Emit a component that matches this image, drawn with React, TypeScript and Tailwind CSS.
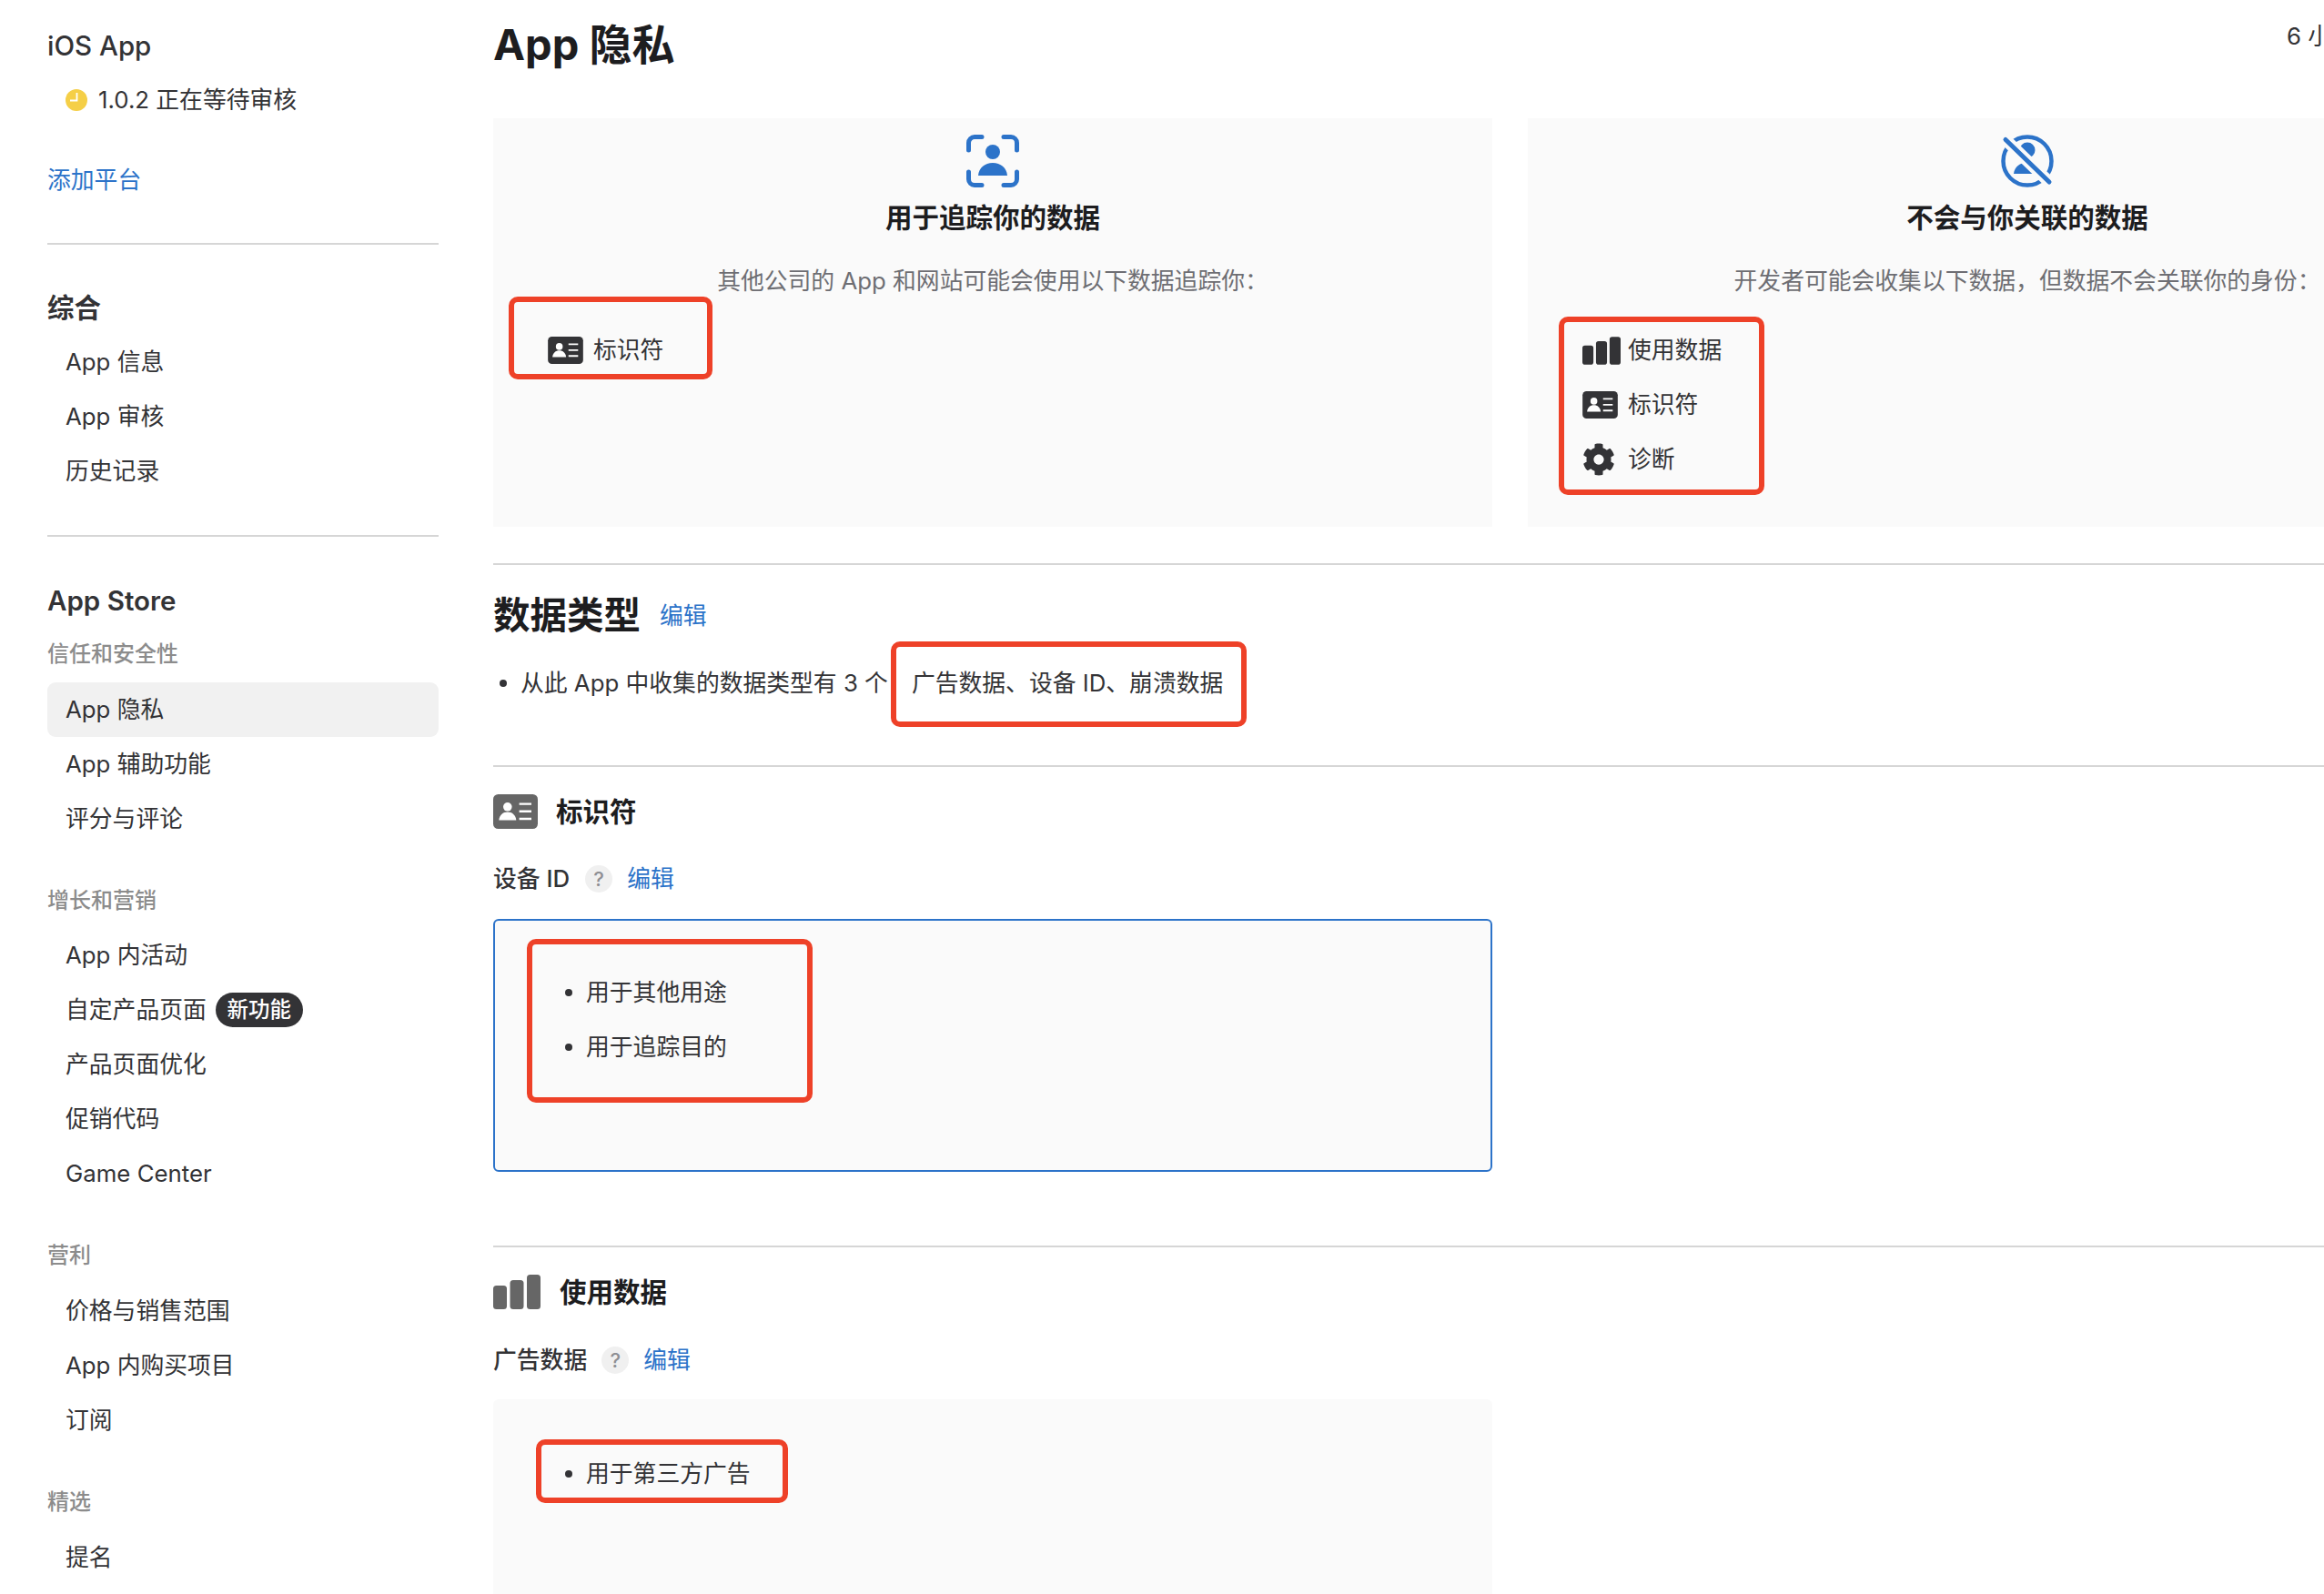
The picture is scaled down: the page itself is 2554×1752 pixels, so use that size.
import React from "react";
import { FaCog } from "react-icons/fa";

const IdCard = ({ className, fill }: { className: string; fill: string }) => (
  <svg viewBox="0 0 49 38" className={className}>
    <rect width="49" height="38" rx="5.5" fill={fill} />
    <circle cx="15.8" cy="13.8" r="4.8" fill="#fff" />
    <path d="M6.3 28.4c.5-5.6 4.4-9 9.5-9s9 3.4 9.5 9z" fill="#fff" />
    <path d="M28.6 10.6h13.4M28.6 18.8h13.4M28.6 27h13.4" stroke="#fff" strokeWidth="2.4" />
  </svg>
);

const Bars = ({ className, fill }: { className: string; fill: string }) => (
  <svg viewBox="0 0 52 38" className={className}>
    <rect x="0" y="12" width="15" height="26" rx="3.5" fill={fill} />
    <rect x="18.5" y="6" width="15" height="32" rx="3.5" fill={fill} />
    <rect x="37" y="0" width="15" height="38" rx="3.5" fill={fill} />
  </svg>
);

const TrackIcon = () => (
  <svg viewBox="0 0 58 58" className="h-[58px] w-[58px]" fill="none">
    <path
      d="M2.5 17V9a6.5 6.5 0 0 1 6.500-6.500H17M41 2.500h8A6.500 6.500 0 0 1 55.500 9v8M55.500 41v8A6.500 6.500 0 0 1 49 55.500h-8M17 55.500H9A6.500 6.500 0 0 1 2.500 49v-8"
      stroke="#2c73c9"
      strokeWidth="5"
      strokeLinecap="round"
    />
    <circle cx="29" cy="19" r="8" fill="#2c73c9" />
    <path d="M13 45c.6-8.500 7.500-14 16-14s15.400 5.500 16 14z" fill="#2c73c9" />
  </svg>
);

const NotLinkedIcon = () => (
  <svg viewBox="0 0 58 58" className="h-[58px] w-[58px]" fill="none">
    <circle cx="29" cy="29" r="26.500" stroke="#2c73c9" strokeWidth="4.500" />
    <circle cx="29" cy="17" r="8.500" fill="#2c73c9" />
    <path d="M14 43c.6-7.500 7-12.500 15-12.500S43.400 35.500 44 43z" fill="#2c73c9" />
    <path d="M4 4.500 54 53" stroke="#fafafa" strokeWidth="13" />
    <path d="M5 5.500 53 52" stroke="#2c73c9" strokeWidth="5" strokeLinecap="round" />
  </svg>
);

const Clock = () => (
  <svg viewBox="0 0 24 24" className="h-[24px] w-[24px] shrink-0">
    <circle cx="12" cy="12" r="12" fill="#f5cf47" />
    <path d="M12.500 4v8.500H5" stroke="#fff" strokeWidth="1.800" fill="none" />
  </svg>
);

const NavRow = ({ children }: { children: React.ReactNode }) => (
  <div className="flex h-[60px] items-center pl-[20px] text-[25.800px] text-[#333336]">{children}</div>
);

const Group = ({ title, items }: { title: string; items: string[] }) => (
  <div className="mt-[40px]">
    <div className="mb-[11px] flex h-[40px] items-center text-[24px] font-medium text-[#8c8c8c]">{title}</div>
    {items.map((t) => (
      <NavRow key={t}>{t}</NavRow>
    ))}
  </div>
);

const Rule = ({ className }: { className: string }) => <div className={`h-[2px] bg-[#d6d6d6] ${className}`} />;

const DataItem = ({ icon, label }: { icon: React.ReactNode; label: string }) => (
  <div className="flex h-[60px] items-center text-[25.800px] text-[#333336]">
    <div className="flex w-[50px] shrink-0 items-center">{icon}</div>
    {label}
  </div>
);

const Bullet = ({ label }: { label: string }) => (
  <div className="flex h-[60px] items-center text-[25.800px] text-[#333336]">
    <span className="mr-[15px] h-[8px] w-[8px] shrink-0 rounded-full bg-[#333336]" />
    {label}
  </div>
);

const Edit = () => <span className="text-[25.800px] text-[#2c73c9]">编辑</span>;

const Help = () => (
  <span className="flex h-[30px] w-[30px] items-center justify-center rounded-full bg-[#f0f0f0] text-[22px] font-medium text-[#8e8e93]">
    ?
  </span>
);

const RedBox = ({ className }: { className: string }) => (
  <div className={`absolute rounded-[10px] border-[6px] border-[#ee4128] ${className}`} />
);

export default function App() {
  return (
    <div
      className="relative flex h-[1752px] w-[2554px] overflow-hidden bg-white text-[#333336]"
      style={{ fontFamily: 'Inter, "Noto Sans CJK SC", "Noto Sans", sans-serif' }}
    >
      <aside className="ml-[52px] w-[430px] shrink-0 pt-[20px]">
        <div className="flex h-[60px] items-center text-[29.500px] font-medium">iOS App</div>
        <div className="flex h-[60px] items-center gap-[12px] pl-[20px] text-[25.800px]">
          <Clock />
          1.0.2 正在等待审核
        </div>
        <div className="mt-[28px] flex h-[60px] items-center text-[25.800px] text-[#2c73c9]">添加平台</div>
        <Rule className="mt-[39px]" />
        <div className="mt-[39px] flex h-[60px] items-center text-[29.500px] font-semibold">综合</div>
        <NavRow>App 信息</NavRow>
        <NavRow>App 审核</NavRow>
        <NavRow>历史记录</NavRow>
        <Rule className="mt-[40px]" />
        <div className="mt-[50px] flex h-[40px] items-center text-[29.500px] font-semibold">App Store</div>
        <div className="mt-[19px] flex h-[40px] items-center text-[24px] font-medium text-[#8c8c8c]">信任和安全性</div>
        <div className="mt-[11px] rounded-[9px] bg-[#f1f1f1]">
          <NavRow>App 隐私</NavRow>
        </div>
        <NavRow>App 辅助功能</NavRow>
        <NavRow>评分与评论</NavRow>
        <div className="mt-[40px]">
          <div className="mb-[10px] flex h-[40px] items-center text-[24px] font-medium text-[#8c8c8c]">增长和营销</div>
          <NavRow>App 内活动</NavRow>
          <NavRow>
            自定产品页面
            <span className="ml-[10px] flex h-[38px] w-[96px] items-center justify-center rounded-full bg-[#333336] text-[23.500px] font-medium text-white">
              新功能
            </span>
          </NavRow>
          <NavRow>产品页面优化</NavRow>
          <NavRow>促销代码</NavRow>
          <NavRow>Game Center</NavRow>
        </div>
        <Group title="营利" items={["价格与销售范围", "App 内购买项目", "订阅"]} />
        <Group title="精选" items={["提名"]} />
      </aside>

      <main className="ml-[60px] flex w-[2235px] shrink-0 flex-col self-start">
        <header className="flex h-[130px] items-start justify-between">
          <h1 className="text-[47px] leading-[98px] font-bold text-[#1d1d1f]">App 隐私</h1>
          <span className="w-[264px] shrink-0 pt-[20px] text-[25.800px] leading-[40px]">6 小时前更新</span>
        </header>

        <section className="flex gap-[39px]">
          <div className="flex h-[449px] w-[1098px] shrink-0 flex-col bg-[#fafafa] pt-[18px]">
            <div className="flex justify-center">
              <TrackIcon />
            </div>
            <h3 className="mt-[13px] h-[40px] text-center text-[29.500px] leading-[40px] font-semibold text-[#1d1d1f]">
              用于追踪你的数据
            </h3>
            <p className="mt-[30px] h-[40px] text-center text-[25.800px] leading-[40px] text-[#6e6e73]">
              其他公司的 App 和网站可能会使用以下数据追踪你：
            </p>
            <div className="mt-[26px] pl-[60px]">
              <DataItem icon={<IdCard className="h-[30px] w-[39px]" fill="#333336" />} label="标识符" />
            </div>
          </div>
          <div className="flex h-[449px] w-[1098px] shrink-0 flex-col bg-[#fafafa] pt-[18px]">
            <div className="flex justify-center">
              <NotLinkedIcon />
            </div>
            <h3 className="mt-[13px] h-[40px] text-center text-[29.500px] leading-[40px] font-semibold text-[#1d1d1f]">
              不会与你关联的数据
            </h3>
            <p className="mt-[30px] h-[40px] text-center text-[25.800px] leading-[40px] text-[#6e6e73]">
              开发者可能会收集以下数据，但数据不会关联你的身份：
            </p>
            <div className="mt-[26px] pl-[60px]">
              <DataItem icon={<Bars className="h-[31px] w-[42px]" fill="#333336" />} label="使用数据" />
              <DataItem icon={<IdCard className="h-[30px] w-[39px]" fill="#333336" />} label="标识符" />
              <DataItem icon={<FaCog className="h-[36px] w-[36px] text-[#333336]" />} label="诊断" />
            </div>
          </div>
        </section>

        <Rule className="mt-[40px]" />
        <div className="mt-[26px] flex h-[60px] items-center gap-[21px]">
          <h2 className="text-[40.500px] font-bold text-[#1d1d1f]">数据类型</h2>
          <Edit />
        </div>
        <div className="mt-[14px] flex h-[60px] items-center pl-[7px] text-[25.800px]">
          <span className="mr-[15px] h-[8px] w-[8px] shrink-0 rounded-full bg-[#333336]" />
          从此 App 中收集的数据类型有 3 个
          <span className="ml-[26px]">广告数据、设备 ID、崩溃数据</span>
        </div>

        <Rule className="mt-[60px]" />
        <div className="mt-[30px] flex h-[38px] items-center gap-[20px]">
          <IdCard className="h-[38px] w-[49px]" fill="#666666" />
          <h3 className="text-[29.500px] font-semibold text-[#1d1d1f]">标识符</h3>
        </div>
        <div className="mt-[35px] flex h-[40px] items-center gap-[17px]">
          <span className="text-[25.800px] font-medium">设备 ID</span>
          <Help />
          <span className="-ml-[1px]">
            <Edit />
          </span>
        </div>
        <div className="mt-[24px] h-[278px] w-[1098px] rounded-[6px] border-2 border-[#2c73c9] bg-[#fafafa] pt-[49px] pl-[77px]">
          <Bullet label="用于其他用途" />
          <Bullet label="用于追踪目的" />
        </div>

        <Rule className="mt-[81px]" />
        <div className="mt-[30px] flex h-[38px] items-center gap-[21px]">
          <Bars className="h-[38px] w-[52px]" fill="#666666" />
          <h3 className="text-[29.500px] font-semibold text-[#1d1d1f]">使用数据</h3>
        </div>
        <div className="mt-[36px] flex h-[40px] items-center gap-[16px]">
          <span className="text-[25.800px] font-medium">广告数据</span>
          <Help />
          <Edit />
        </div>
        <div className="mt-[23px] h-[300px] w-[1098px] shrink-0 rounded-[6px] bg-[#fafafa] pt-[52px] pl-[79px]">
          <Bullet label="用于第三方广告" />
        </div>
      </main>

      <RedBox className="top-[326px] left-[559px] h-[91px] w-[224px]" />
      <RedBox className="top-[348px] left-[1713px] h-[196px] w-[226px]" />
      <RedBox className="top-[705px] left-[979px] h-[94px] w-[391px]" />
      <RedBox className="top-[1032px] left-[579px] h-[180px] w-[314px]" />
      <RedBox className="top-[1582px] left-[589px] h-[70px] w-[277px]" />
    </div>
  );
}
